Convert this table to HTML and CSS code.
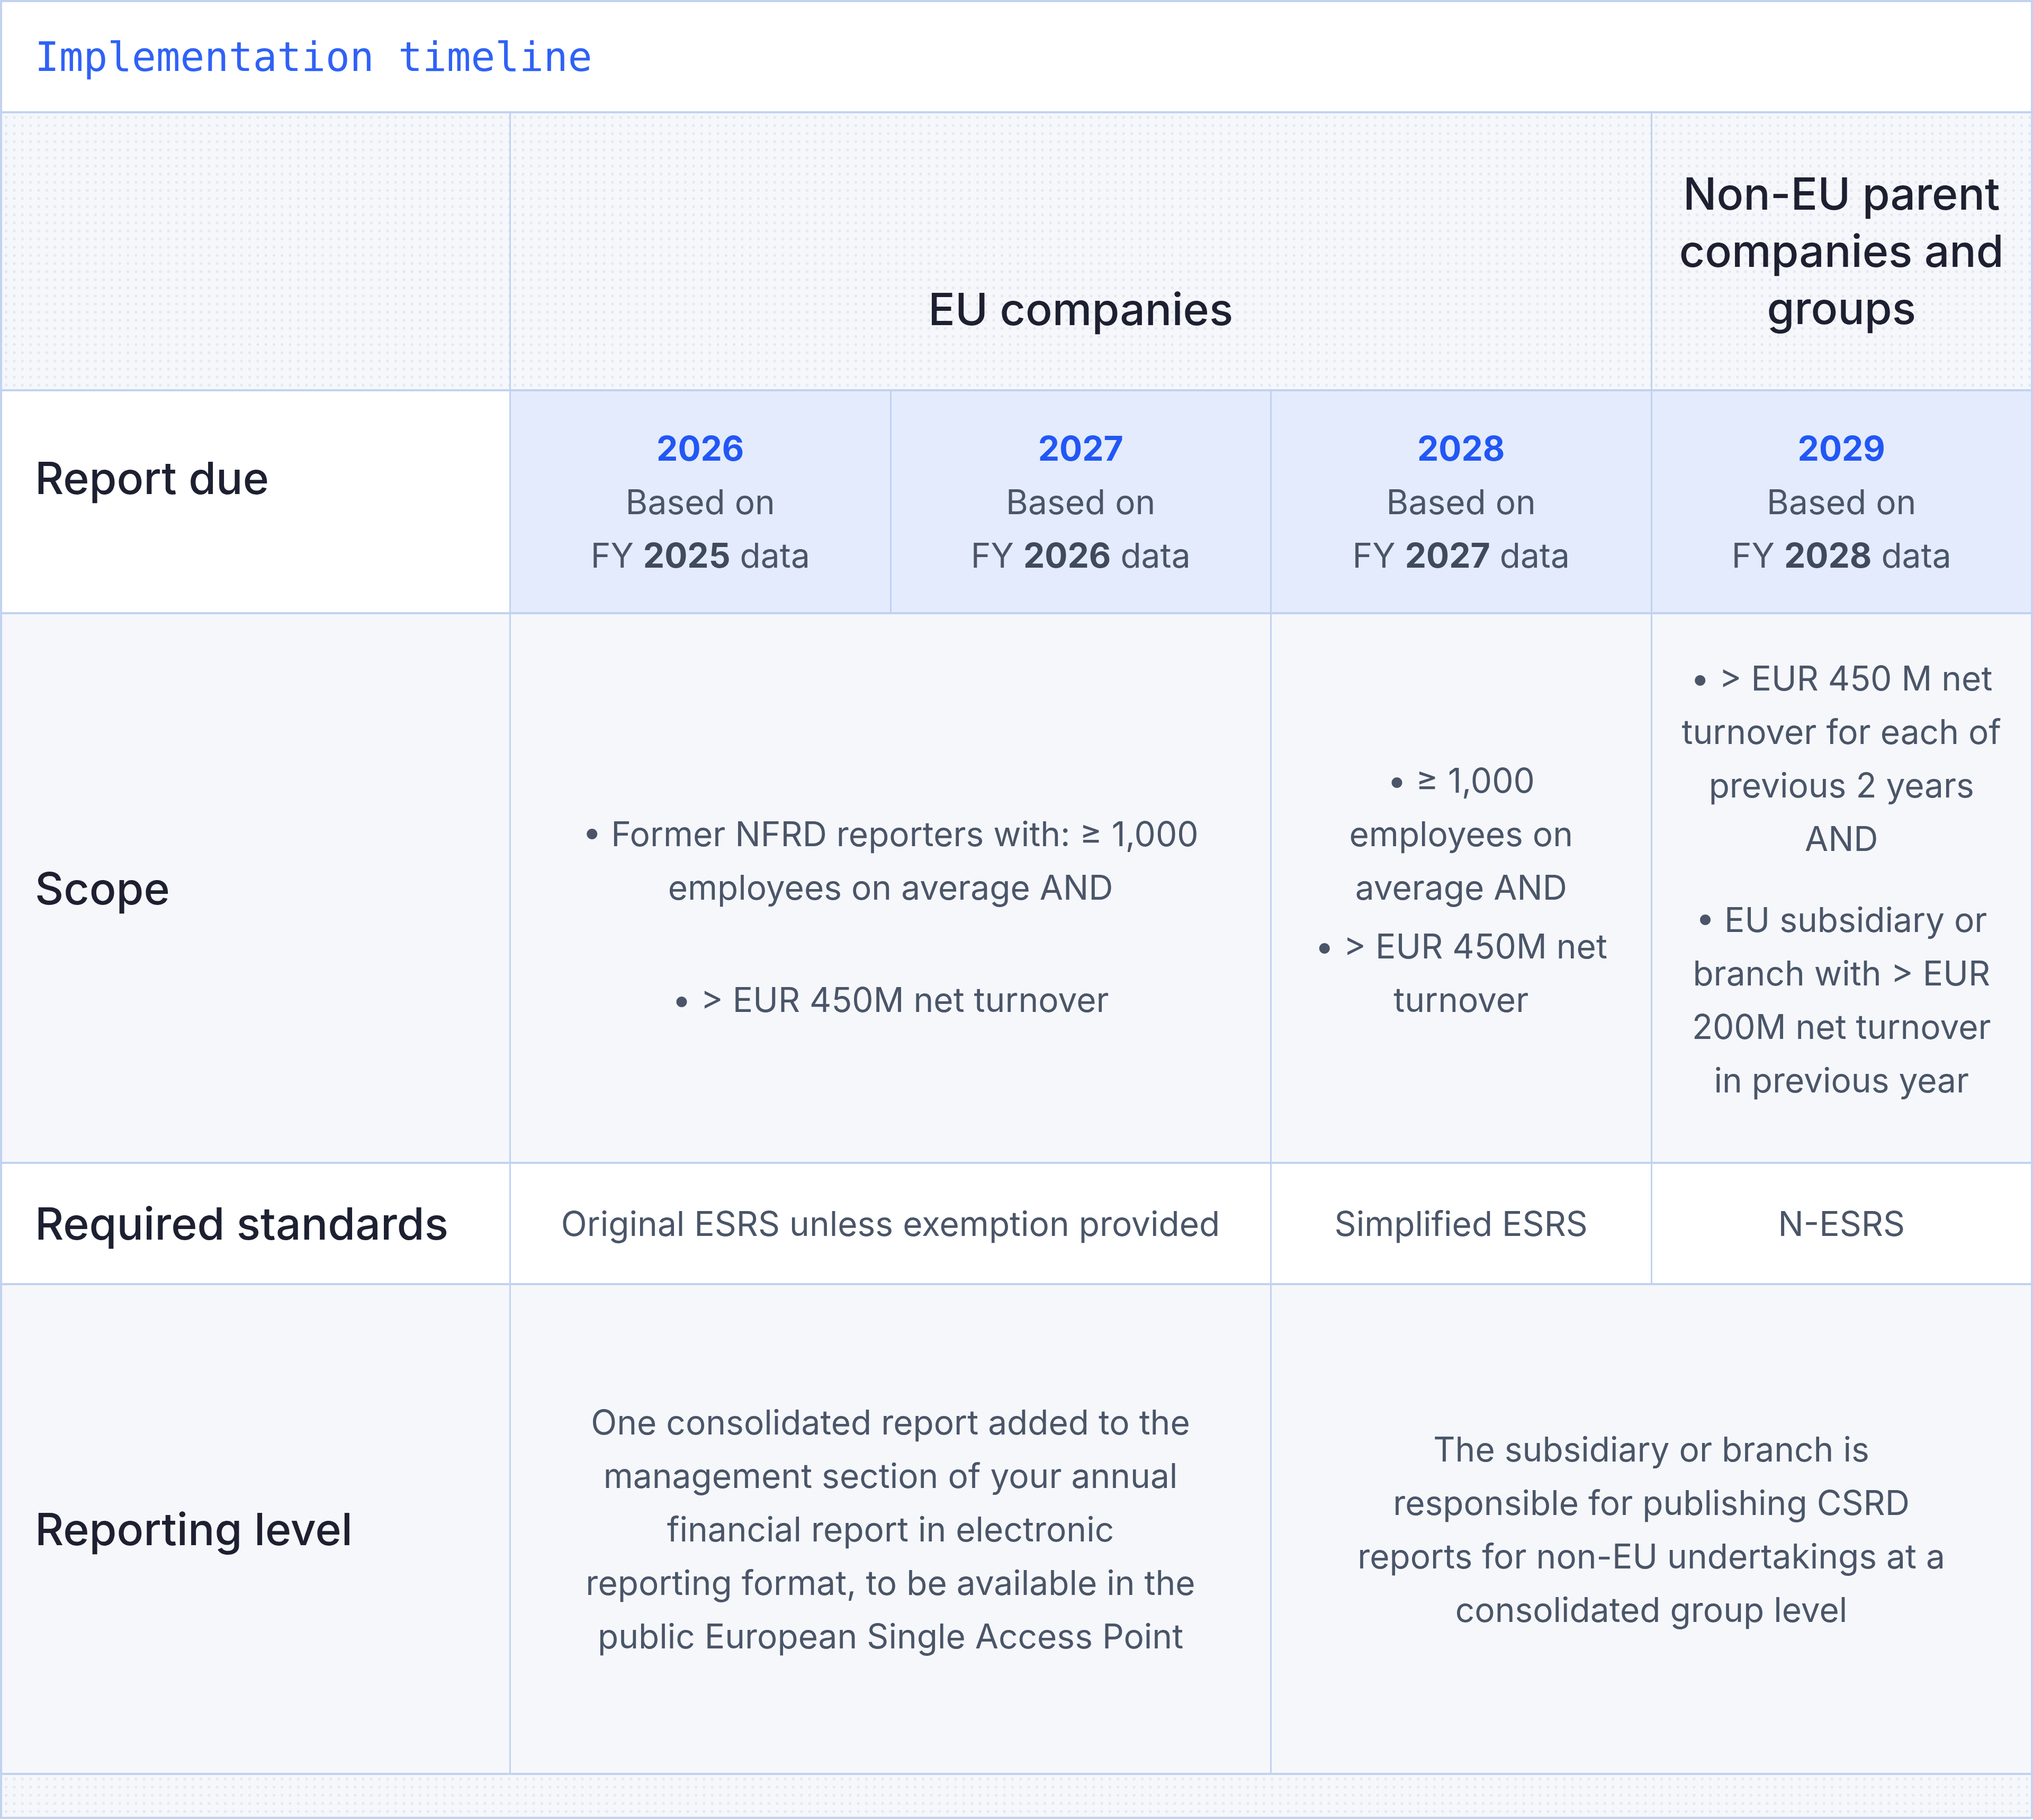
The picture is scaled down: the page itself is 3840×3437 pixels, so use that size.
FILE: index.html
```html
<!DOCTYPE html>
<html lang="en">
<head>
<meta charset="utf-8">
<title>Implementation timeline</title>
<link rel="stylesheet" href="styles.css">
</head>
<body>
<div class="timeline">
  <div class="title">Implementation timeline</div>
  <div class="grid">
    <div class="cell pattern"></div>
    <div class="cell pattern head head-eu span3">EU companies</div>
    <div class="cell pattern head head-noneu">Non-EU parent<br>companies and<br>groups</div>

    <div class="cell label label-due">Report due</div>
    <div class="cell year">
      <div class="year-num">2026</div>
      <div>Based on</div>
      <div>FY <b>2025</b> data</div>
    </div>
    <div class="cell year">
      <div class="year-num">2027</div>
      <div>Based on</div>
      <div>FY <b>2026</b> data</div>
    </div>
    <div class="cell year">
      <div class="year-num">2028</div>
      <div>Based on</div>
      <div>FY <b>2027</b> data</div>
    </div>
    <div class="cell year">
      <div class="year-num">2029</div>
      <div>Based on</div>
      <div>FY <b>2028</b> data</div>
    </div>

    <div class="cell label soft">Scope</div>
    <div class="cell soft text scope scope-eu span2">
      <p>• Former NFRD reporters with: ≥ 1,000<br>employees on average AND</p>
      <p>• &gt; EUR 450M net turnover</p>
    </div>
    <div class="cell soft text scope scope-2028">
      <p>• ≥ 1,000<br>employees on<br>average AND</p>
      <p>• &gt; EUR 450M net<br>turnover</p>
    </div>
    <div class="cell soft text scope scope-noneu">
      <p>• &gt; EUR 450 M net<br>turnover for each of<br>previous 2 years<br>AND</p>
      <p>• EU subsidiary or<br>branch with &gt; EUR<br>200M net turnover<br>in previous year</p>
    </div>

    <div class="cell label">Required standards</div>
    <div class="cell text std span2">Original ESRS unless exemption provided</div>
    <div class="cell text std">Simplified ESRS</div>
    <div class="cell text std">N-ESRS</div>

    <div class="cell label soft">Reporting level</div>
    <div class="cell soft text level span2">One consolidated report added to the<br>management section of your annual<br>financial report in electronic<br>reporting format, to be available in the<br>public European Single Access Point</div>
    <div class="cell soft text level span2">The subsidiary or branch is<br>responsible for publishing CSRD<br>reports for non-EU undertakings at a<br>consolidated group level</div>
  </div>
  <div class="footer pattern"></div>
</div>
</body>
</html>
```

FILE: styles.css
```css
* {
  box-sizing: border-box;
}

html, body {
  margin: 0;
  padding: 0;
  background: #ffffff;
}

body {
  font-family: "Inter", "Noto Sans", sans-serif;
  color: #4a5568;
}

.timeline {
  width: 3840px;
  border: 4px solid #c2d2f0;
  background: #ffffff;
}

.title {
  height: 210px;
  border-bottom: 4px solid #c2d2f0;
  padding: 0 62px;
  display: flex;
  align-items: center;
  font-family: "DejaVu Sans Mono", "Liberation Mono", monospace;
  font-size: 76px;
  color: #2f62f6;
  white-space: nowrap;
}

.grid {
  display: grid;
  grid-template-columns: 958px repeat(4, 1fr);
  column-gap: 3px;
  row-gap: 4px;
  background: #c2d2f0;
}

.cell {
  background: #ffffff;
  display: flex;
  flex-direction: column;
  justify-content: center;
  align-items: center;
  text-align: center;
}

.span2 {
  grid-column: span 2;
}

.span3 {
  grid-column: span 3;
}

.pattern {
  background-color: #f5f7fb;
  background-image: radial-gradient(circle, #e2e8f3 0, #e2e8f3 2.3px, rgba(226, 232, 243, 0) 3px);
  background-size: 15.33px 15.33px;
  background-position: 0 0;
}

.soft {
  background-color: #f5f7fb;
}

.head {
  font-size: 84px;
  font-weight: 500;
  line-height: 108px;
  color: #1d2030;
  padding: 98px 30px 99px;
}

.head-eu {
  justify-content: flex-end;
  padding-bottom: 97px;
}

.label {
  align-items: flex-start;
  text-align: left;
  padding: 60px 62px;
  font-size: 84px;
  font-weight: 500;
  line-height: 105px;
  color: #1d2030;
}

.label-due {
  padding-bottom: 150px;
}

.year {
  background-color: #e3ebfd;
  padding: 57px 20px;
  font-size: 64px;
  line-height: 101px;
  color: #4a5568;
}

.year b {
  font-weight: 700;
  color: #3f4a5c;
}

.year-num {
  font-weight: 700;
  color: #2257f5;
}

.text {
  font-size: 64px;
  line-height: 101px;
  color: #4a5568;
}

.text p {
  margin: 0;
}

.scope {
  padding: 76px 30px 70px;
}

.scope-eu {
  padding-top: 177px;
}

.scope-eu p + p {
  margin-top: 111px;
}

.scope-2028 p + p {
  margin-top: 10px;
}

.scope-noneu {
  padding-top: 70px;
  padding-bottom: 104px;
}

.scope-noneu p + p {
  margin-top: 52px;
}

.std {
  padding: 62px 30px;
}

.level {
  padding: 208px 60px;
}

.footer {
  height: 83px;
  border-top: 4px solid #c2d2f0;
}
```
